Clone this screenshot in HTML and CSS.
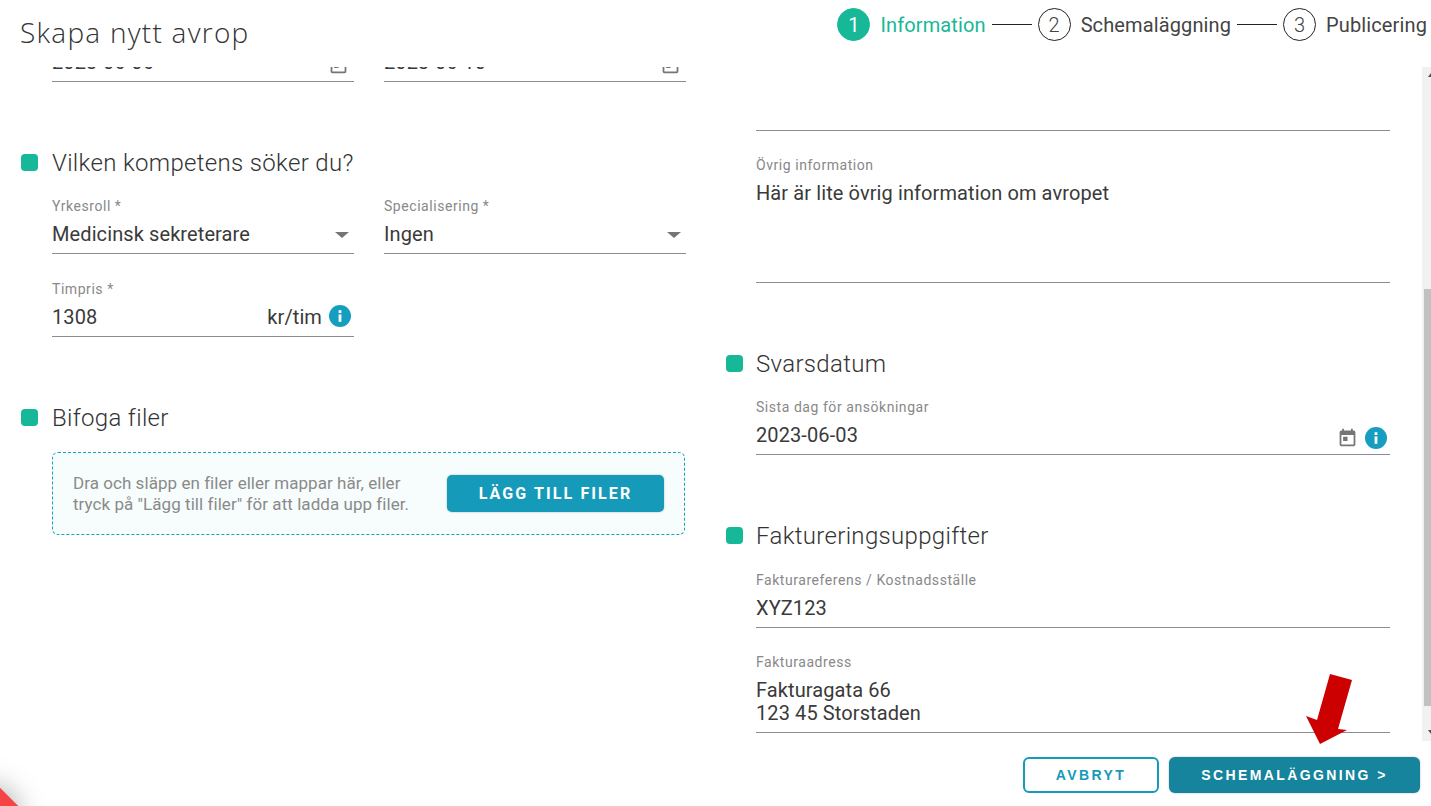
FILE: index.html
```html
<!DOCTYPE html>
<html lang="sv">
<head>
<meta charset="UTF-8">
<title>Skapa nytt avrop</title>
<link rel="stylesheet" href="styles.css">
</head>
<body>
<div class="page">

<!-- Header + stepper -->
<header class="header">
  <h1 class="title">Skapa nytt avrop</h1>
  <div class="stepper">
    <span class="step-num active">1</span>
    <span class="step-label active">Information</span>
    <span class="step-line"></span>
    <span class="step-num">2</span>
    <span class="step-label">Schemaläggning</span>
    <span class="step-line"></span>
    <span class="step-num">3</span>
    <span class="step-label">Publicering</span>
  </div>
</header>

<div class="body">
  <main class="scroll">

    <!-- Left column -->
    <div class="col col-left">
      <div class="row row-dates">
        <div class="field">
          <label>&nbsp;</label>
          <div class="value"><span>2023-06-06</span><svg class="cal" viewBox="0 0 24 24"><path d="M19 4h-1V2h-2v2H8V2H6v2H5a2 2 0 0 0-2 2v14a2 2 0 0 0 2 2h14a2 2 0 0 0 2-2V6a2 2 0 0 0-2-2zm0 16H5V9h14v11zM7 11h5v5H7z"/></svg></div>
        </div>
        <div class="field">
          <label>&nbsp;</label>
          <div class="value"><span>2023-06-10</span><svg class="cal" viewBox="0 0 24 24"><path d="M19 4h-1V2h-2v2H8V2H6v2H5a2 2 0 0 0-2 2v14a2 2 0 0 0 2 2h14a2 2 0 0 0 2-2V6a2 2 0 0 0-2-2zm0 16H5V9h14v11zM7 11h5v5H7z"/></svg></div>
        </div>
      </div>

      <h2 class="section-title sec-kompetens">Vilken kompetens söker du?</h2>
      <div class="row">
        <div class="field">
          <label>Yrkesroll *</label>
          <div class="value"><span>Medicinsk sekreterare</span><i class="caret"></i></div>
        </div>
        <div class="field">
          <label>Specialisering *</label>
          <div class="value"><span>Ingen</span><i class="caret"></i></div>
        </div>
      </div>
      <div class="row row-price">
        <div class="field">
          <label>Timpris *</label>
          <div class="value"><span>1308</span><span class="unit">kr/tim</span><svg class="info" viewBox="0 0 22 22"><circle cx="11" cy="11" r="11"/><rect x="9.6" y="9.4" width="2.8" height="7.4" fill="#fff"/><rect x="9.6" y="5.2" width="2.8" height="2.8" fill="#fff"/></svg></div>
        </div>
      </div>

      <h2 class="section-title sec-bifoga">Bifoga filer</h2>
      <div class="dropzone">
        <p>Dra och släpp en filer eller mappar här, eller<br>tryck på "Lägg till filer" för att ladda upp filer.</p>
        <button class="btn-add">LÄGG TILL FILER</button>
      </div>
    </div>

    <!-- Right column -->
    <div class="col col-right">
      <div class="field area-top"></div>
      <div class="field area-info">
        <label>Övrig information</label>
        <div class="value">Här är lite övrig information om avropet</div>
      </div>

      <h2 class="section-title sec-svar">Svarsdatum</h2>
      <div class="field">
        <label>Sista dag för ansökningar</label>
        <div class="value"><span>2023-06-03</span><svg class="cal cal-right" viewBox="0 0 24 24"><path d="M19 4h-1V2h-2v2H8V2H6v2H5a2 2 0 0 0-2 2v14a2 2 0 0 0 2 2h14a2 2 0 0 0 2-2V6a2 2 0 0 0-2-2zm0 16H5V9h14v11zM7 11h5v5H7z"/></svg><svg class="info" viewBox="0 0 22 22"><circle cx="11" cy="11" r="11"/><rect x="9.6" y="9.4" width="2.8" height="7.4" fill="#fff"/><rect x="9.6" y="5.2" width="2.8" height="2.8" fill="#fff"/></svg></div>
      </div>

      <h2 class="section-title sec-faktura">Faktureringsuppgifter</h2>
      <div class="field">
        <label>Fakturareferens / Kostnadsställe</label>
        <div class="value">XYZ123</div>
      </div>
      <div class="field area-address">
        <label>Fakturaadress</label>
        <div class="value">Fakturagata 66<br>123 45 Storstaden</div>
      </div>
    </div>
  </main>

  <!-- Scrollbar -->
  <div class="scrollbar">
    <span class="sb-arrow sb-up"></span>
    <div class="sb-track"><div class="sb-thumb"></div></div>
    <span class="sb-arrow sb-down"></span>
  </div>
</div>

<footer class="footer">
  <button class="btn btn-outline">AVBRYT</button>
  <button class="btn btn-solid">SCHEMALÄGGNING &gt;</button>
</footer>

<!-- Annotation + corner -->
<svg class="red-arrow" viewBox="0 0 50 74"><polygon points="25,1 47,7 33,56 42,57 15,71 1,43 12,47" fill="#cc0000"/></svg>
<div class="corner"></div>
</div>
</body>
</html>
```

FILE: styles.css
```css
* { box-sizing:border-box; }
html, body { margin:0; height:100%; }
body { font-family:Roboto, sans-serif; background:#fff; color:#333; overflow:hidden; }
.page { position:relative; width:1431px; height:806px; overflow:hidden; display:flex; flex-direction:column; }

/* header */
.header { height:67px; flex:none; display:flex; justify-content:space-between; padding:0 4px 0 20px; }
.title { margin:14px 0 0; font-family:"Open Sans", sans-serif; font-weight:300; font-size:28px; line-height:36px; letter-spacing:1.25px; color:#333; }
.stepper { display:flex; align-items:center; height:49px; font-size:20px; color:#444; }
.step-num { width:33px; height:33px; border:1px solid #222; border-radius:50%; display:flex; align-items:center; justify-content:center; font-weight:300; }
.step-num.active { background:#17b897; border-color:#17b897; color:#fff; font-weight:400; }
.step-label { margin-left:10px; letter-spacing:.12px; }
.step-label.active { color:#17b897; }
.step-line { width:40px; height:1px; background:#222; margin:0 6px; }

/* scroll area */
.body { height:674px; flex:none; display:flex; }
.scroll { flex:1; min-width:0; overflow:hidden; display:flex; }
.col { flex:none; }
.col-left { width:756px; padding-left:52px; }
.col-right { width:634px; }

.row { display:flex; gap:30px; width:634px; }
.row .field { width:302px; }
.row-dates { margin-top:-41px; }
.row-price { margin-top:27px; }

.field { border-bottom:1px solid #8c8c8c; }
.field label { display:block; font-size:14px; line-height:16px; color:#888; letter-spacing:.55px; }
.value { display:flex; align-items:center; font-size:20px; line-height:23px; height:39px; padding-top:2px; color:#3a3a3a; letter-spacing:.1px; }
.value span:first-child { flex:1; }
.unit { margin-right:7px; }
.caret { width:0; height:0; border-left:7px solid transparent; border-right:7px solid transparent; border-top:6px solid #757575; margin-right:5px; }
.cal { width:21px; height:21px; fill:#757575; margin-right:5px; position:relative; top:2px; }
.cal-right { margin-right:7px; }
.info { width:22px; height:22px; fill:#159ebf; margin-right:3px; position:relative; top:2px; }
.row-price .info { top:-2px; }

.section-title { position:relative; margin:0; font-weight:300; font-size:24px; line-height:28px; letter-spacing:.33px; color:#333; }
.section-title::before { content:""; position:absolute; left:-31px; top:5px; width:17px; height:17px; border-radius:4px; background:#17b897; }
.col-right .section-title::before { left:-30px; }
.sec-kompetens { margin-top:67px; margin-bottom:21px; }
.sec-bifoga { margin-top:67px; }
.sec-svar { margin-top:67px; margin-bottom:21px; }
.sec-faktura { margin-top:67px; margin-bottom:22px; }

/* right column fields */
.area-top { height:64px; }
.area-info { margin-top:26px; height:126px; }
.area-address { margin-top:26px; height:79px; }
.area-address .value { display:block; height:auto; padding-top:9px; }

/* dropzone */
.dropzone { width:633px; height:83px; margin-top:20px; border:1px dashed #15a3c0; border-radius:6px; background:#f7fdfd; display:flex; align-items:center; justify-content:space-between; padding:0 20px; }
.dropzone p { margin:0; font-size:17px; line-height:21px; color:#8a8a8a; letter-spacing:.05px; }
.btn-add { flex:none; width:217px; height:37px; border:none; border-radius:5px; background:#159ab9; color:#fff; font-family:Roboto, sans-serif; font-size:16px; font-weight:700; letter-spacing:2.1px; box-shadow:0 0 2px rgba(0,0,0,.3); padding:0; }

/* scrollbar, cut by the window edge like the real one */
.scrollbar { width:9px; flex:none; background:#f1f1f1; display:flex; flex-direction:column; overflow:hidden; }
.sb-arrow { height:17px; flex:none; position:relative; }
.sb-arrow::after { content:""; position:absolute; left:6px; top:6px; border-left:3px solid transparent; border-right:3px solid transparent; }
.sb-up::after { border-bottom:4px solid #505050; }
.sb-down::after { border-top:4px solid #505050; }
.sb-track { flex:1; }
.sb-thumb { margin:205px 0 0 2px; height:417px; background:#c1c1c1; }

/* footer */
.footer { flex:1; display:flex; justify-content:flex-end; gap:10px; padding:16px 11px 0 0; }
.btn { height:36px; border-radius:6px; font-family:"Liberation Sans", Arial, sans-serif; font-size:14px; font-weight:700; letter-spacing:2.4px; padding:0; }
.btn-outline { width:136px; background:#fff; border:2px solid #159ab9; color:#159ab9; }
.btn-solid { width:251px; background:#15849c; border:none; color:#fff; box-shadow:0 0 2px rgba(0,0,0,.3); }

/* things lying on top */
.red-arrow { position:absolute; left:1305px; top:673px; width:50px; height:74px; }
.corner { position:absolute; left:-26px; top:790px; width:40px; height:40px; background:#f44444; transform:rotate(45deg); box-shadow:0 0 28px rgba(0,0,0,.35); }
```
